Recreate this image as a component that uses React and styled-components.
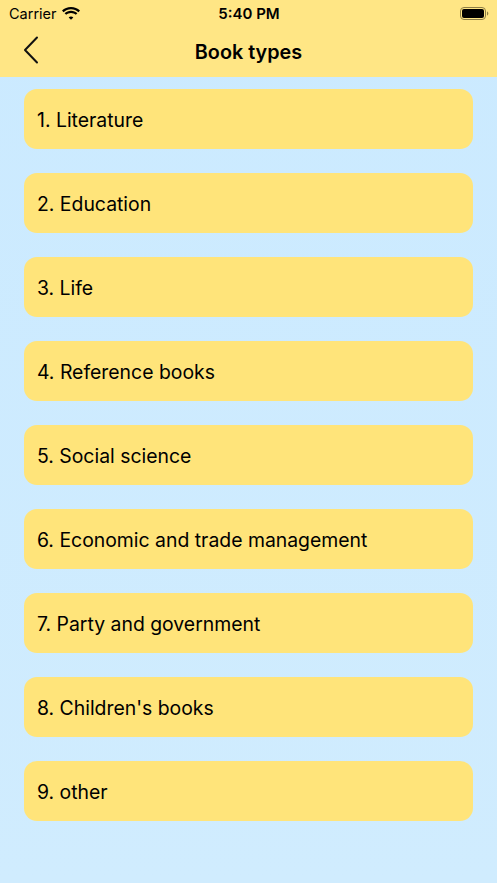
import React from "react";
import styled, { createGlobalStyle } from "styled-components";

const Global = createGlobalStyle`
  *, *::before, *::after { box-sizing: border-box; }
  html, body { margin: 0; padding: 0; }
  body {
    background: #cdebfe;
    font-family: Inter, "Noto Sans", "Liberation Sans", sans-serif;
    color: #000;
  }
`;

const Screen = styled.div`
  width: 497px;
  height: 883px;
  display: flex;
  flex-direction: column;
  background: linear-gradient(#cbeaff, #d0ecfe);
  overflow: hidden;
`;

const Header = styled.header`
  background: #ffe685;
  display: flex;
  flex-direction: column;
  height: 77px;
  flex-shrink: 0;
`;

const StatusBar = styled.div`
  height: 26px;
  display: grid;
  grid-template-columns: 1fr auto 1fr;
  align-items: center;
  padding: 0 8px 0 9px;
  font-size: 14.5px;
`;

const Carrier = styled.div`
  display: flex;
  align-items: center;
  gap: 5px;
  font-weight: 400;
`;

const Time = styled.div`
  font-weight: 600;
  font-size: 15px;
`;

const Battery = styled.div`
  justify-self: end;
  display: flex;
  align-items: center;
`;

const NavBar = styled.div`
  flex: 1;
  position: relative;
  display: flex;
  align-items: center;
  justify-content: center;
`;

const Back = styled.button`
  position: absolute;
  left: 22px;
  top: 9px;
  border: 0;
  background: none;
  padding: 0;
  display: flex;
`;

const Title = styled.h1`
  margin: 0;
  font-size: 19.8px;
  font-weight: 600;
`;

const List = styled.div`
  display: flex;
  flex-direction: column;
  gap: 24px;
  padding: 12px 24px;
`;

const Card = styled.div`
  height: 60px;
  background: #ffe47a;
  border-radius: 13px;
  display: flex;
  align-items: center;
  padding: 1px 13px 0;
  font-size: 19.4px;
  font-weight: 400;
`;

const items = [
  "1. Literature",
  "2. Education",
  "3. Life",
  "4. Reference books",
  "5. Social science",
  "6. Economic and trade management",
  "7. Party and government",
  "8. Children's books",
  "9. other",
];

export default function App() {
  return (
    <>
      <Global />
      <Screen>
        <Header>
          <StatusBar>
            <Carrier>
              Carrier
              <svg width="18" height="13" viewBox="0 0 18 13">
                <path d="M9 2.2c2.9 0 5.5 1.1 7.4 3L18 3.6C15.7 1.3 12.5 0 9 0S2.3 1.3 0 3.6l1.6 1.6C3.5 3.3 6.1 2.2 9 2.2z" fill="#000" />
                <path d="M9 5.9c1.9 0 3.6.7 4.8 1.9l1.6-1.6C13.7 4.6 11.5 3.7 9 3.7s-4.7.9-6.4 2.5l1.6 1.6C5.4 6.6 7.1 5.9 9 5.9z" fill="#000" />
                <path d="M9 9.5c.9 0 1.7.3 2.3.9L9 12.8 6.7 10.4c.6-.6 1.4-.9 2.3-.9z" fill="#000" />
              </svg>
            </Carrier>
            <Time>5:40 PM</Time>
            <Battery>
              <svg width="29" height="13" viewBox="0 0 29 13">
                <rect x="0.5" y="0.5" width="25" height="12" rx="3.5" fill="none" stroke="#8c7d45" strokeWidth="1" />
                <rect x="2" y="2" width="22" height="9" rx="2" fill="#000" />
                <path d="M27 4.5v4c.8-.3 1.3-1.1 1.3-2s-.5-1.7-1.3-2z" fill="#8c7d45" />
              </svg>
            </Battery>
          </StatusBar>
          <NavBar>
            <Back aria-label="Back">
              <svg width="18" height="30" viewBox="0 0 18 30">
                <path d="M15 2.5L3 15l12 12.5" fill="none" stroke="#111" strokeWidth="2" strokeLinecap="round" strokeLinejoin="round" />
              </svg>
            </Back>
            <Title>Book types</Title>
          </NavBar>
        </Header>
        <List>
          {items.map((t) => (
            <Card key={t}>{t}</Card>
          ))}
        </List>
      </Screen>
    </>
  );
}
